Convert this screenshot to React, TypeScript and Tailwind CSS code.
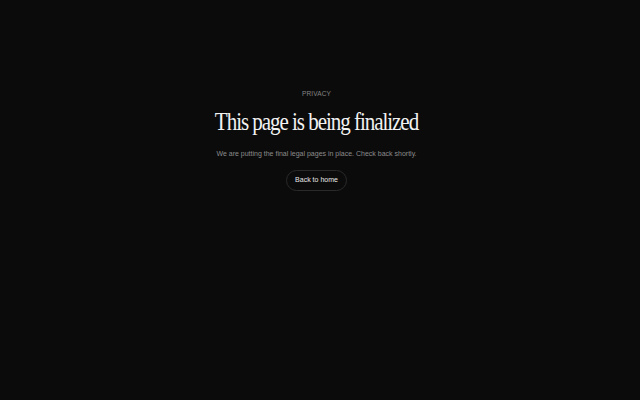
export default function App() {
  return (
    <div className="min-h-[400px] w-full bg-[#0b0b0b] pr-[7px]">
      <main className="flex flex-col items-center pt-[89px] text-center">
        <p className="font-['Liberation_Sans',Arial,sans-serif] text-[6.5px] uppercase leading-[10px] tracking-[0.02em] text-[#858585]">
          Privacy
        </p>
        <h1 className="mt-[7px] origin-center scale-x-[0.81] whitespace-nowrap font-['Liberation_Serif','Times_New_Roman',serif] text-[26px] leading-[32px] tracking-[-0.05em] text-[#f2f2f2]">
          This page is being finalized
        </h1>
        <p className="mt-[10px] font-['Liberation_Sans',Arial,sans-serif] text-[7px] leading-[12px] text-[#8c8c8c]">
          We are putting the final legal pages in place. Check back shortly.
        </p>
        <a
          href="#"
          className="mt-[10px] flex h-[21px] items-center rounded-full border border-[#2a2a2a] px-[8px] font-['Liberation_Sans',Arial,sans-serif] text-[7px] text-[#e8e8e8]"
        >
          Back to home
        </a>
      </main>
    </div>
  );
}
